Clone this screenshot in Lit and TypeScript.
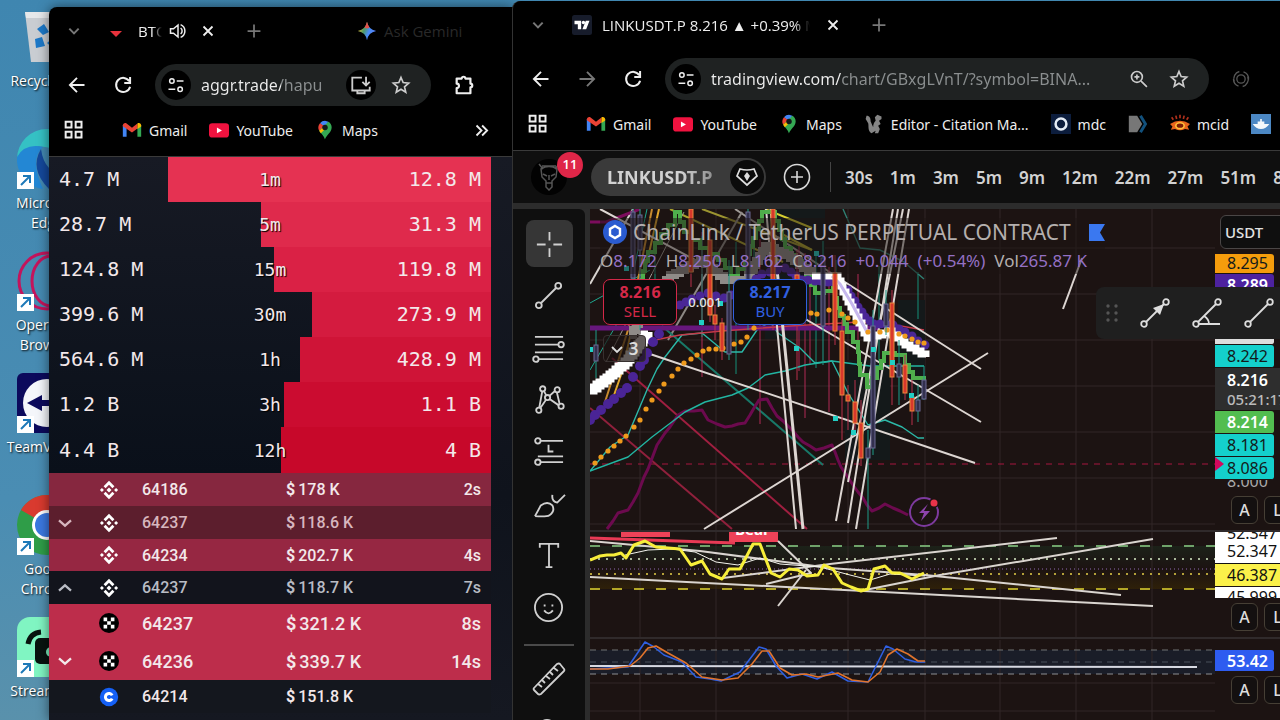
import { LitElement, html, svg, css, nothing } from "lit";
import { customElement, property } from "lit/decorators.js";
import { classMap } from "lit/directives/class-map.js";

/* ---------- icons ---------- */

const glyph = (size: number, body: unknown, box = "0 0 24 24") =>
  html`<svg class="glyph" width=${size} height=${size} viewBox=${box} fill="none" stroke="currentColor" stroke-width="2" aria-hidden="true">${body}</svg>`;

const icons = {
  chevron: () => glyph(14, svg`<path d="M4 8l8 8 8-8" stroke-width="3.4"/>`),
  up: () => glyph(16, svg`<path d="M3 16l9-8 9 8" stroke-width="3.4"/>`),
  down: () => glyph(16, svg`<path d="M3 8l9 8 9-8" stroke-width="3.4"/>`),
  close: () => glyph(12, svg`<path d="M3 3l18 18M21 3L3 21" stroke-width="3.6"/>`),
  plus: () => glyph(14, svg`<path d="M12 1v22M1 12h22" stroke-width="3"/>`),
  back: () => glyph(20, svg`<path d="M21 12H4M12 3.5L3.5 12l8.500 8.500" stroke-width="2.3"/>`),
  forward: () => glyph(20, svg`<path d="M3 12h17M12 3.500l8.500 8.500-8.500 8.500" stroke-width="2.3"/>`),
  reload: () => glyph(20, svg`<path d="M19.500 7.500A8.500 8.500 0 1 0 20.500 14M20.500 2.500v7h-7" stroke-width="2.400"/>`),
  tune: () => glyph(18, svg`<circle cx="6.500" cy="6.500" r="3"/><path d="M13 6.500h9M2 17.500h9"/><circle cx="17.500" cy="17.500" r="3"/>`),
  star: () => glyph(20, svg`<path d="M12 3l2.600 6.100 6.600.6-5 4.400 1.500 6.500L12 17.200l-5.700 3.400 1.500-6.500-5-4.400 6.600-.6z"/>`),
  zoom: () => glyph(20, svg`<circle cx="9.500" cy="9.500" r="6.500"/><path d="M14.500 14.500l7 7M9.500 6.500v6M6.500 9.500h6"/>`),
  install: () => glyph(22, svg`<path d="M13 4H2.500v14h19v-4M8 18v3h8v-3M17.500 3v9M13.500 8.500l4 4 4-4"/>`),
  extension: () => glyph(22, svg`<path d="M4 5h5.500a2 2 0 0 1 4 0H19v5.500a2 2 0 0 1 0 4V21H4v-5.500a2.500 2.500 0 0 0 0-5z" stroke-width="2.400" stroke-linejoin="round"/>`),
  sync: () => glyph(20, svg`<path d="M4 15a9 9 0 0 1 6-12M20 9a9 9 0 0 1-6 12M15 3.500a9 9 0 0 1 6 9M3 12a9 9 0 0 0 6 8.500" stroke-width="1.600"/><circle cx="12" cy="12" r="5" stroke-width="1.600"/>`),
  apps: () => glyph(20, svg`<path d="M2 2h7v7H2zM14 2h7v7h-7zM2 14h7v7H2zM14 14h7v7h-7z" stroke-width="2.400"/>`),
  more: () => glyph(15, svg`<path d="M4 4l8 8-8 8M13 4l8 8-8 8" stroke-width="3"/>`),
  speaker: () => glyph(18, svg`<path d="M2 9v6h4l6 5V4L6 9zM15.500 8a5 5 0 0 1 0 8M15.500 3.500a9.200 9.200 0 0 1 0 17" stroke-width="2"/>`),
  gmail: () => glyph(20, svg`<g stroke="none"><path d="M1 6v14h4.500V9z" fill="#4285f4"/><path d="M18.500 9v11H23V6z" fill="#34a853"/><path d="M1 6.500C1 4 3.800 2.800 5.500 4.200L12 9.200l6.500-5v6L12 15 1 7.500z" fill="#ea4335"/><path d="M18.500 4.200C20.500 2.800 23 4 23 6.500v1.200l-4.500 3z" fill="#fbbc04"/></g>`),
  youtube: () => glyph(20, svg`<rect y="4" width="24" height="17" rx="4" fill="#f0123f" stroke="none"/><path d="M9.500 9v7l6-3.500z" fill="#fff" stroke="none"/>`),
  maps: () => glyph(20, svg`<g stroke="none"><path d="M12 1a8 8 0 0 0-6 2.800L12 9l4-7z" fill="#4285f4"/><path d="M6 3.800A8.500 8.500 0 0 0 5 13l7-5z" fill="#ea4335"/><path d="M5 13c2 3 6 6 7 10.500 1-5 8-8.500 8-14.500A8 8 0 0 0 16 2z" fill="#34a853"/><path d="M5 13l2 3 8-8-3-1z" fill="#fbbc04"/><circle cx="12" cy="9" r="3.300" fill="#10191a"/></g>`),
  squirrel: () => glyph(20, svg`<path d="M3 2c4 0 5 3 5 7l3 7c0-4 1-6 3-8l-1-4 3-3 5 2v3l-3 2 2 4-3 2 2 4-2 5h-4l1-3-5 3C4 20 6 14 5 11L2 6z" fill="#858585" stroke="none"/>`),
  mdc: () => glyph(20, svg`<rect width="24" height="24" fill="#0c1d3d" stroke="none"/><circle cx="12" cy="12" r="6.500" stroke="#e4ecf5" stroke-width="3"/>`),
  tag: () => glyph(20, svg`<path d="M1 2h10l6 10-6 10H1z" fill="#777" stroke="none"/><path d="M15 2l6 10-6 10" stroke="#12517d" stroke-width="3.500"/>`),
  eye: () => glyph(20, svg`<path d="M0 12l3 3-2 4 5-1q6 3 12 0l5 1-2-4 3-3q-12-8-24 0" fill="#e8641c" stroke="none"/><ellipse cx="12" cy="14" rx="5" ry="3.500" fill="#7a1c08" stroke="#ffc03a" stroke-width="2"/><path d="M4 7L2 4M8 6L7 2M12 5V1M16 6l1-4M20 7l2-3" stroke="#b0301c"/>`),
  boat: () => glyph(20, svg`<rect width="24" height="24" fill="#4c88c4" stroke="none"/><path d="M2 12h20q-4 6-10 6T2 12M8 9h8v3H8zM11 6h2v3h-2z" fill="#f4f8fb" stroke="none"/>`),
  gemini: () => html`<svg width="20" height="20" viewBox="0 0 24 24" aria-hidden="true"><defs><linearGradient id="gem" x1="0" y1="0.300" x2="1" y2="0.700"><stop offset="0" stop-color="#f2c12e"/><stop offset=".35" stop-color="#4c9a6a"/><stop offset=".6" stop-color="#4a8cf7"/><stop offset="1" stop-color="#5a7df5"/></linearGradient></defs><path d="M12 1q1.500 9 11 11-9.500 2-11 11Q10.500 14 1 12q9.500-2 11-11" fill="url(#gem)"/><path d="M12 1q1.500 5 3 7l-3 1-3-1q2-3 3-7" fill="#e2504a"/></svg>`,
  tradingview: () => glyph(20, svg`<rect width="24" height="24" rx="3" fill="#171c2b" stroke="none"/><path d="M3 7h8v10H7v-6H3zM16.500 7H21l-4 10h-4.500z" fill="#fff" stroke="none"/><circle cx="13.700" cy="9" r="2" fill="#fff" stroke="none"/>`),
  redArrow: () => glyph(16, svg`<path d="M3 12h18l-9 9z" fill="#e8323c" stroke="none"/>`),
};

type Mark = { icon: unknown; text?: string };

const MARKS: Mark[] = [
  { icon: icons.gmail(), text: "Gmail" },
  { icon: icons.youtube(), text: "YouTube" },
  { icon: icons.maps(), text: "Maps" },
];

/* ---------- browser frame ---------- */

@customElement("browser-window")
export class BrowserWindow extends LitElement {
  @property() tabTitle = "";
  @property() host = "";
  @property() path = "";
  @property({ attribute: false }) favicon: unknown = nothing;
  @property({ attribute: false }) marks: Mark[] = MARKS;
  @property({ type: Boolean }) audio = false;
  @property({ type: Boolean }) canForward = false;

  static styles = css`
    :host { display: flex; flex-direction: column; background: #000; color: #eee; overflow: hidden;
      font-family: "Open Sans", "Noto Sans", sans-serif; font-size: 14px; }
    button { all: unset; display: grid; place-items: center; flex: none; }
    svg { display: block; flex: none; }
    .tabs { display: flex; align-items: center; height: 48px; padding-left: 18px; flex: none; }
    .tab { display: flex; align-items: center; margin-left: 27px; }
    .title { width: 208px; margin: 0 17px 0 10px; white-space: nowrap; overflow: hidden; font-size: 15px;
      mask-image: linear-gradient(90deg, #000 92%, transparent); }
    .short .title { width: 24px; margin: 0 7px 0 14px; mask-image: linear-gradient(90deg, #000 60%, transparent); }
    .short .mute { margin-right: 15px; }
    .dim { color: #777; }
    .new { margin-left: 33px; }
    .gemini { display: flex; align-items: center; gap: 7px; margin-left: 96px; color: #292929; font-size: 15px; }
    .nav { display: flex; align-items: center; gap: 22px; margin-top: 9px; padding-left: 18px; flex: none; }
    .moves { display: flex; gap: 26px; }
    .pill { display: flex; align-items: center; flex: 1; min-width: 0; height: 42px; border-radius: 21px; background: #1f2222; }
    .chip { display: grid; place-items: center; width: 30px; height: 30px; border-radius: 50%; background: #000; flex: none; }
    .site { margin: 0 10px 0 6px; }
    input { all: unset; flex: 1; min-width: 0; font: 16px "Noto Sans", "Open Sans", sans-serif; white-space: nowrap; overflow: hidden; }
    .tools { display: flex; align-items: center; gap: 20px; padding: 0 20px 0 8px; color: #ccc; }
    .short .tools { gap: 15px; }
    .ext { display: flex; gap: 24px; width: 49px; overflow: hidden; color: #555; }
    .short .ext { width: 60px; color: #eee; }
    .marks { display: flex; align-items: center; height: 51px; padding: 0 0 2px 15px; flex: none; border-bottom: 1px solid #3a3a3a; box-sizing: border-box; }
    .list { display: flex; gap: 22px; margin-left: 38px; flex: 1; min-width: 0; overflow: hidden; font-family: "Noto Sans", "Open Sans", sans-serif; }
    a { display: flex; align-items: center; gap: 7px; color: #eee; text-decoration: none; white-space: nowrap; flex: none; }
    .overflow { margin-right: 24px; }
    .page { flex: 1; min-height: 0; display: flex; flex-direction: column; }
  `;

  render() {
    const ink = this.audio ? 80 : 130;
    return html`
      <div class=${classMap({ frame: true, short: this.audio })}>
        <div class="tabs">
          <button class="dim" aria-label="Search tabs">${icons.chevron()}</button>
          <div class="tab">
            ${this.favicon}<span class="title">${this.tabTitle}</span>
            ${this.audio ? html`<button class="mute" aria-label="Mute tab">${icons.speaker()}</button>` : nothing}
            <button aria-label="Close tab">${icons.close()}</button>
          </div>
          <button class="new dim" aria-label="New tab">${icons.plus()}</button>
          ${this.audio ? html`<button class="gemini">${icons.gemini()}<span>Ask Gemini</span></button>` : nothing}
        </div>
        <div class="nav">
          <div class="moves">
            <button aria-label="Back">${icons.back()}</button>
            ${this.canForward ? html`<button class="dim" aria-label="Forward">${icons.forward()}</button>` : nothing}
            <button aria-label="Reload">${icons.reload()}</button>
          </div>
          <div class="pill">
            <button class="chip site" aria-label="Site information">${icons.tune()}</button>
            <input aria-label="Address" .value=${this.host + this.path}
              style="color:transparent;-webkit-background-clip:text;background-clip:text;background-image:linear-gradient(90deg,#eee ${ink}px,#8b8f90 ${ink}px)" />
            <div class="tools">
              ${this.audio
                ? html`<button class="chip" aria-label="Install app">${icons.install()}</button>`
                : html`<button aria-label="Zoom">${icons.zoom()}</button>`}
              <button aria-label="Bookmark">${icons.star()}</button>
            </div>
          </div>
          <div class="ext">
            ${this.audio
              ? html`<button aria-label="Extensions">${icons.extension()}</button>`
              : html`<button aria-label="Sync">${icons.sync()}</button>`}
          </div>
        </div>
        <div class="marks">
          <button aria-label="Apps">${icons.apps()}</button>
          <nav class="list">
            ${this.marks.map((m) => html`<a href="#">${m.icon}${m.text ? html`<span>${m.text}</span>` : nothing}</a>`)}
          </nav>
          ${this.audio ? html`<button class="overflow" aria-label="More bookmarks">${icons.more()}</button>` : nothing}
        </div>
      </div>
      <div class="page"><slot></slot></div>
    `;
  }
}

/* ---------- trade flow ---------- */

const FLOW: [string, string, string, number, string][] = [
  ["4.7 M", "1m", "12.8 M", 27, "#e53252"],
  ["28.7 M", "5m", "31.3 M", 48, "#df2a4c"],
  ["124.8 M", "15m", "119.8 M", 51, "#da2145"],
  ["399.6 M", "30m", "273.9 M", 59.4, "#d41b3f"],
  ["564.6 M", "1h", "428.9 M", 56.7, "#cf1437"],
  ["1.2 B", "3h", "1.1 B", 53.2, "#cb0c30"],
  ["4.4 B", "12h", "4 B", 52.4, "#c7082a"],
];

type Trade = { tone: string; arrow?: "up" | "down"; venue: "binance" | "okx" | "coinbase"; price: string; size: string; age: string };

const TRADES: Trade[] = [
  { tone: "mid", venue: "binance", price: "64186", size: "178 K", age: "2s" },
  { tone: "dark", arrow: "down", venue: "binance", price: "64237", size: "118.6 K", age: "" },
  { tone: "warm", venue: "binance", price: "64234", size: "202.7 K", age: "4s" },
  { tone: "off", arrow: "up", venue: "binance", price: "64237", size: "118.7 K", age: "7s" },
  { tone: "big", venue: "okx", price: "64237", size: "321.2 K", age: "8s" },
  { tone: "big", arrow: "down", venue: "okx", price: "64236", size: "339.7 K", age: "14s" },
  { tone: "plain", venue: "coinbase", price: "64214", size: "151.8 K", age: "" },
];

const venueIcon = {
  binance: () => glyph(20, svg`<g fill="#fff" stroke="none"><path d="M12 1l6.500 6.500-2.400 2.400L12 5.800 7.900 9.900 5.500 7.500zM12 23l6.500-6.500-2.400-2.400-4.100 4.100-4.100-4.100-2.400 2.400zM12 9l3 3-3 3-3-3zM3.500 9.600L5.900 12l-2.400 2.400L1.100 12zM20.500 9.600l2.400 2.400-2.400 2.400-2.400-2.400z"/></g>`),
  okx: () => glyph(20, svg`<circle cx="12" cy="12" r="12" fill="#000" stroke="none"/><path d="M5.500 5.500h4.300v4.300H5.500zM14.200 5.500h4.300v4.300h-4.300zM9.800 9.800h4.400v4.400H9.800zM5.500 14.200h4.300v4.300H5.500zM14.200 14.200h4.300v4.300h-4.300z" fill="#fff" stroke="none"/>`),
  coinbase: () => glyph(20, svg`<circle cx="12" cy="12" r="11" fill="#1560f5" stroke="none"/><path d="M15.800 10a4.300 4.300 0 1 0 0 4" stroke="#fff" stroke-width="3.600"/>`),
};

@customElement("trade-flow")
export class TradeFlow extends LitElement {
  static styles = css`
    :host { display: block; flex: 1; padding-right: 22px; background: linear-gradient(#171a24, #0f131c 60%, #151821); color: #f3e8ea; overflow: hidden; }
    svg { display: block; }
    .ratio { display: grid; grid-template-columns: 1fr 60px 1fr; align-items: center; height: 45px; padding: 0 10px;
      background: linear-gradient(90deg, transparent var(--at), var(--tone) var(--at)); font: 20px/45px "DejaVu Sans Mono", "Liberation Mono", monospace; }
    .ratio:last-child { height: 46px; }
    .ratios { background: linear-gradient(#171a24, #0a101a); }
    .span { font-size: 18px; text-align: center; text-shadow: 1px 1px 1px #000; }
    .sell { text-align: right; }
    .trade { display: grid; grid-template-columns: 50px 43px 144px 1fr auto; align-items: center; height: 33px; padding: 0 10px 0 0;
      font: 500 16px Roboto, sans-serif; }
    .trade > :first-child { padding-left: 8px; }
    .size b { margin-right: 3px; font-weight: 700; }
    .mid { background: #86273f; }
    .dark { background: #5c1e2d; color: #d7b6be; }
    .warm { background: #962742; height: 32px; }
    .off { background: #12141c; color: #b9bcc4; }
    .big { background: #bd2d4b; height: 38px; font-size: 18px; }
    .plain { background: #14171e; }
  `;
  render() {
    return html`
      <div class="ratios">
        ${FLOW.map(([buy, span, sell, at, tone]) => html`<div class="ratio" style="--at:${at}%;--tone:${tone}">
          <span>${buy}</span><span class="span">${span}</span><span class="sell">${sell}</span></div>`)}
      </div>
      ${TRADES.map((t) => html`<div class="trade ${t.tone}">
        <span>${t.arrow ? icons[t.arrow]() : nothing}</span>
        <span class="venue">${venueIcon[t.venue]()}</span>
        <span>${t.price}</span><span class="size"><b>$</b>${t.size}</span><span>${t.age}</span></div>`)}
    `;
  }
}

/* ---------- chart drawing ---------- */

type Pt = [number, number];
const line = (pts: Pt[], color: string, width = 2, extra = "") =>
  svg`<polyline points=${pts.map((p) => p.join(",")).join(" ")} stroke=${color} stroke-width=${width} stroke-dasharray=${extra || "none"} fill="none" stroke-linejoin="round"/>`;
const dots = (pts: Pt[], color: string, r: number) => pts.map(([x, y]) => svg`<circle cx=${x} cy=${y} r=${r} fill=${color}/>`);
const steps = (pts: Pt[], color: string, width: number) => {
  const d = pts.map(([x, y], i) => (i ? `H${x}V${y}` : `M${x} ${y}`)).join("");
  return svg`<path d=${d} stroke=${color} stroke-width=${width} fill="none"/>`;
};
/* splits a polyline into small stair steps */
const dense = (pts: Pt[], gap = 4): Pt[] => {
  const out: Pt[] = [];
  for (let i = 0; i + 1 < pts.length; i++) {
    const [a, b] = [pts[i], pts[i + 1]];
    const n = Math.max(1, Math.round(Math.hypot(b[0] - a[0], b[1] - a[1]) / gap));
    for (let k = 0; k < n; k++) out.push([Math.round(a[0] + ((b[0] - a[0]) * k) / n), Math.round(a[1] + ((b[1] - a[1]) * k) / n)]);
  }
  out.push(pts[pts.length - 1]);
  return out;
};

const RED = "#d8382c", SLATE = "#33304e";
/* x, wick top, body top, body bottom, wick bottom, falling */
const CANDLES: [number, number, number, number, number, boolean][] = [
  [596, 330, 345, 361, 378, false], [633, 209, 212, 278, 300, false], [640, 209, 215, 250, 330, false],
  [691, 209, 209, 272, 287, true], [710, 230, 240, 315, 322, true], [715, 305, 315, 324, 340, true],
  [722, 318, 323, 351, 360, true], [729, 260, 292, 354, 360, false], [748, 209, 212, 292, 330, false],
  [773, 209, 209, 281, 330, true], [797, 250, 275, 322, 380, true], [823, 241, 258, 326, 365, false],
  [835, 255, 273, 331, 345, true], [842, 320, 331, 395, 440, true], [848, 385, 395, 401, 430, true],
  [855, 380, 402, 423, 430, true], [861, 400, 423, 458, 466, true], [868, 430, 448, 458, 529, false],
  [873, 310, 326, 448, 455, false], [886, 290, 304, 326, 335, false], [892, 290, 303, 377, 405, true],
  [899, 340, 364, 377, 405, false], [905, 355, 365, 393, 400, true], [912, 380, 397, 411, 425, true],
  [918, 385, 400, 411, 422, false], [924, 366, 380, 399, 400, false],
];

const verticals = [640, 716, 848, 925, 1000, 1076, 1152];
const white = "#dad5d0";

const pricePane = svg`
  <g stroke="#312727" stroke-width="1">
    ${verticals.map((x) => svg`<path d="M${x} 209V530"/>`)}
    ${[248, 294, 340, 386, 432, 478, 524].map((y) => svg`<path d="M590 ${y}H1400"/>`)}
  </g>
  <g fill="#14191a"><path d="M765 209h60v130h-60zM845 360h45v100h-45zM898 300h27v100h-27z"/></g>
  ${line([[590, 464], [1400, 464]], "#a5173f", 1, "6 6")}
  ${line([[670, 209], [783, 262]], "#a8a02c", 2)}
  ${line([[702, 209], [812, 250]], "#9c9430", 2)}
  ${line([[765, 209], [812, 228]], "#d8cf30", 2)}
  ${line([[780, 233], [812, 250]], "#b0a82e", 2)}
  ${line([[735, 209], [837, 277]], "#a09b97", 2)}
  ${line([[590, 284], [633, 209]], "#d8d3cf", 2)}
  ${line([[590, 303], [650, 270]], "#1fa68e", 1)}
  ${line([[606, 362], [684, 212]], "#9d9893", 1)}
  ${line([[668, 340], [742, 212]], "#8d8884", 2)}
  ${line([[590, 222], [606, 222], [622, 216], [640, 209]], "#7c0c5c", 3)}
  ${line([[605, 402], [628, 330], [652, 209]], "#c88a2e", 2)}
  ${line([[613, 398], [622, 372], [659, 209]], "#e0a52c", 2)}
  ${line([[590, 370], [625, 310], [647, 209]], "#1fa68e", 1)}
  ${line([[590, 408], [732, 529]], "#90203c", 2)}
  ${line([[612, 358], [807, 529]], "#a01f40", 2)}
  ${line([[662, 326], [823, 465]], "#187868", 2)}
  ${[640, 702, 760, 799, 805, 810, 829, 858].map((x, i) => line([[x, 225 + i * 7], [x, 330 + ((i * 47) % 100)]], "#b02a54", 1))}
  ${[655, 702, 736, 754, 816, 836, 879, 918].map((x, i) => line([[x, 230 + i * 6], [x, 300 + ((i * 37) % 80)]], "#159078", 1))}
  ${line(dense([[607, 529], [618, 513], [628, 510], [638, 493], [657, 445], [678, 415], [685, 411], [702, 410], [708, 420], [725, 427], [745, 423], [759, 400], [767, 399], [777, 416], [788, 426], [803, 442], [816, 450], [832, 445], [841, 467], [853, 485], [872, 511], [885, 504], [908, 515]], 8), "#6c0a4e", 3)}
  ${line([[590, 471], [610, 447], [628, 435], [647, 390], [657, 369], [665, 357], [682, 335], [702, 333], [725, 352], [742, 352], [757, 330], [770, 322], [778, 333], [800, 348], [815, 363], [832, 361], [848, 393], [868, 425], [885, 420], [902, 427], [918, 438], [924, 438]], "#2cb8a8", 1.4)}
  ${line([[590, 471], [628, 457], [652, 437], [685, 412], [705, 402], [732, 395], [748, 388], [765, 375], [785, 371], [805, 365], [832, 361], [870, 366], [924, 366]], "#22b5a2", 1.4)}
  ${line([[843, 209], [860, 248], [880, 250], [904, 262], [924, 279]], "#2f7f72", 1.4)}
  ${line([[590, 328], [880, 328]], "#67177c", 5)}
  ${line([[645, 342], [680, 335], [722, 331], [790, 326], [860, 322], [895, 325], [924, 330]], "#c63a4a", 1.4)}
  ${line([[600, 209], [807, 320], [981, 422]], "#ddd6d2")}
  ${line([[650, 354], [975, 463]], "#ddd6d2")}
  ${line([[704, 529], [988, 353]], "#ddd6d2")}
  ${line([[837, 277], [981, 369]], "#ddd6d2")}
  ${line([[766, 209], [796, 529]], "#ddd6d2")}
  ${line([[771, 209], [803, 529]], "#ddd6d2", 3)}
  ${line([[836, 521], [893, 209]], "#ddd6d2")}
  ${line([[848, 523], [898, 209]], "#ddd6d2")}
  ${line([[848, 482], [903, 209]], "#ddd6d2")}
  ${line([[856, 529], [909, 209]], "#ddd6d2")}
  ${line([[1063, 309], [1082, 258]], "#ddd6d2")}
  ${steps(dense([[640, 280], [648, 252], [668, 225], [675, 212], [684, 232], [700, 248], [718, 260], [731, 276], [745, 262], [753, 238], [762, 212], [772, 212], [785, 248], [802, 268], [815, 293], [833, 288], [837, 308], [847, 332], [858, 352], [860, 375], [867, 387], [877, 368], [884, 353], [895, 355], [905, 365], [913, 378], [924, 380]], 10), "#4fae4c", 4)}
  ${steps(dense([[590, 390], [607, 378], [625, 362], [648, 332]], 4), "#fff", 9)}
  ${steps(dense([[630, 335], [650, 298], [670, 275], [700, 260], [724, 280], [745, 280], [765, 246], [785, 255], [812, 274]], 6), "#8f8b88", 8)}
  ${dots(dense([[590, 420], [595, 415], [627, 388], [633, 377], [640, 366], [647, 353], [653, 342], [659, 334]], 9), "#4a2496", 5)}
  ${dots(dense([[680, 305], [692, 299], [708, 293], [724, 298], [745, 290], [762, 274], [785, 268], [802, 280], [834, 282], [848, 290], [858, 307], [865, 317], [874, 324], [893, 325], [905, 332], [925, 345]], 7), "#4a2796", 4.500)}
  ${steps(dense([[812, 276], [836, 276], [848, 302], [867, 338], [888, 331], [905, 345], [926, 357]], 6), "#fff", 7)}
  ${line([[832, 276], [840, 284], [852, 304], [868, 334]], "#c7b8ee", 3)}
  ${dots([[595, 463], [601, 457], [608, 451], [614, 446], [620, 441], [626, 436], [634, 427], [640, 420], [646, 409], [652, 400], [659, 391], [664, 384], [672, 376], [678, 369], [684, 363], [691, 359], [697, 355], [703, 351], [709, 349], [716, 349], [723, 348], [734, 344], [741, 342], [747, 337], [754, 328], [811, 313], [817, 314], [829, 310], [842, 314], [848, 318], [855, 322], [868, 332], [880, 332], [887, 330], [899, 334], [905, 336], [912, 339], [918, 342], [924, 343]], "#ef9a1c", 2.6)}
  ${CANDLES.map(([x, wt, bt, bb, wb, fall]) => svg`
    <path d="M${x} ${wt}V${wb}" stroke=${fall ? "#b8304a" : "#1f9c88"}/>
    <rect x=${x - 2} y=${bt} width="4" height=${bb - bt} fill=${fall ? RED : SLATE} stroke=${fall ? "#e88a3c" : "#6d6a94"} stroke-width="1"/>`)}
  <g fill="#22cfc4">${[[590, 349], [701, 322], [720, 303], [796, 348], [816, 253], [835, 418], [853, 432], [873, 349], [892, 362], [911, 395], [626, 268]].map(([x, y]) => svg`<rect x=${x - 2} y=${y - 2} width="5" height="5"/>`)}</g>
  <circle cx="924" cy="512" r="14" fill="#1c1312" stroke="#7d3a9e" stroke-width="2"/>
  <path d="M928 504l-9 9h5l-3 8 9-10h-6z" fill="#8e44ad"/>
  <circle cx="934" cy="503" r="5" fill="#1c1312"/><circle cx="934" cy="503" r="3.500" fill="#e8334a"/>
`;

const rsiPane = svg`
  <defs>
    <linearGradient id="g1" x1="0" y1="0" x2="0" y2="1"><stop offset="0" stop-color="#1c2219"/><stop offset="1" stop-color="#1c1312"/></linearGradient>
    <linearGradient id="g2" x1="0" y1="0" x2="0" y2="1"><stop offset="0" stop-color="#1c1312"/><stop offset="1" stop-color="#2e2009"/></linearGradient>
  </defs>
  <rect x="590" y="546" width="900" height="22" fill="url(#g1)"/>
  <rect x="590" y="568" width="900" height="21" fill="url(#g2)"/>
  <g stroke="#312727">${verticals.map((x) => svg`<path d="M${x} 532V637"/>`)}</g>
  ${line([[590, 546], [1400, 546]], "#6fa36a", 2, "10 12")}
  ${line([[590, 559], [1400, 559]], "#a9b89a", 2, "2 6")}
  ${line([[590, 569], [1400, 569]], "#8d6bb5", 1, "1 3")}
  ${line([[590, 574], [1400, 574]], "#b5a23a", 2, "2 6")}
  ${line([[590, 589], [1400, 589]], "#b3a727", 2, "10 12")}
  ${line([[590, 538], [735, 543]], "#e83a55", 3)}
  <g>
    <rect x="621" y="530" width="49" height="7" fill="#ee4258"/><rect x="729" y="530" width="49" height="12" fill="#ee4258"/>
    <text x="735" y="535" fill="#fff" font-size="15" font-weight="700">Bear</text>
  </g>
  ${line([[590, 541], [700, 551], [830, 568], [925, 575], [1121, 595]], white)}
  ${line([[590, 577], [1153, 606]], white)}
  ${line([[723, 578], [830, 564], [1057, 538]], white)}
  ${line([[865, 590], [940, 575], [1153, 539]], white)}
  ${line([[778, 541], [811, 573], [766, 584]], white)}
  ${line([[778, 606], [806, 570]], white)}
  ${line([[625, 555], [648, 550], [672, 549], [695, 552], [716, 562], [738, 565], [760, 558], [780, 564], [820, 567], [850, 575], [870, 580], [890, 574], [925, 576]], "#f4f4ee", 1)}
  ${line([[590, 560], [600, 556], [607, 555], [614, 555], [621, 553], [626, 558], [634, 545], [645, 541], [656, 547], [680, 549], [691, 565], [702, 561], [710, 574], [722, 579], [729, 569], [740, 569], [753, 544], [760, 544], [771, 573], [780, 577], [789, 569], [798, 570], [807, 576], [818, 575], [824, 565], [833, 569], [842, 583], [851, 587], [861, 591], [868, 589], [874, 569], [885, 566], [892, 573], [900, 573], [912, 579], [924, 573]], "#f7ee3a", 3)}
`;

const stochPane = svg`
  <rect x="590" y="650" width="900" height="24" fill="#1a1d28"/>
  <g stroke="#312727">${verticals.map((x) => svg`<path d="M${x} 640V720"/>`)}<path d="M590 683H1400M590 711H1400"/></g>
  ${line([[590, 650], [1400, 650]], "#6e7372", 1, "6 5")}
  ${line([[590, 662], [1400, 662]], "#49505a", 1, "6 5")}
  ${line([[590, 674], [1400, 674]], "#8c8f92", 1, "6 5")}
  ${line([[590, 666], [1197, 667]], "#d7d9e2", 2)}
  ${line([[590, 669], [610, 668], [628, 667], [645, 642], [654, 647], [664, 655], [682, 662], [696, 677], [710, 679], [721, 681], [740, 672], [759, 647], [766, 649], [776, 666], [787, 678], [802, 674], [817, 679], [832, 672], [848, 681], [868, 682], [877, 664], [886, 646], [893, 649], [905, 659], [916, 662], [925, 662]], "#2f5fe0", 1.6)}
  ${line([[590, 669], [608, 669], [630, 666], [640, 658], [648, 648], [656, 646], [668, 653], [686, 663], [702, 677], [722, 680], [738, 678], [752, 664], [762, 651], [769, 651], [780, 668], [792, 675], [806, 674], [818, 677], [838, 673], [852, 680], [868, 682], [880, 672], [888, 655], [897, 649], [908, 654], [918, 661], [925, 661]], "#e0742c", 1.6)}
`;

const DRAW = [
  svg`<path d="M15 2v9M15 19v9M2 15h9M19 15h9"/>`,
  svg`<circle cx="4" cy="24" r="3"/><circle cx="24" cy="4" r="3"/><path d="M6 22L22 6"/>`,
  svg`<path d="M0 3h29M0 11h25M0 19h29M3 26h26"/><circle cx="27" cy="11" r="2.800" fill="#0f0f0f"/><circle cx="1" cy="26" r="2.800" fill="#0f0f0f"/>`,
  svg`<path d="M8 3L4 25l9-13 9-8 4 17-13-9L8 3"/><g fill="#0f0f0f"><circle cx="8" cy="3" r="2.700"/><circle cx="4" cy="25" r="2.700"/><circle cx="13" cy="12" r="2.700"/><circle cx="23" cy="4" r="2.700"/><circle cx="27" cy="21" r="2.700"/></g>`,
  svg`<circle cx="3" cy="3" r="2.800"/><circle cx="3" cy="25" r="2.800"/><path d="M6 3h23M3 19h26M6 25h23M14 7v7h5"/>`,
  svg`<path d="M0 27Q4 20 6 16q7-5 12 0 3 6-3 10-3 2-15 1M18 5q-1 7 5 8l8-8"/>`,
  svg`<path d="M5 6V2h19v4M14.500 2v24M11 26h7"/>`,
  svg`<circle cx="14" cy="14" r="14"/><path d="M9.500 17q4.500 6 9 0M10 11v2M18 11v2"/>`,
];

@customElement("trading-desk")
export class TradingDesk extends LitElement {
  static styles = css`
    :host { display: flex; flex-direction: column; flex: 1; min-height: 0; background: #2c2c2c; color: #d2d2d2;
      font-family: "Noto Sans", "Open Sans", sans-serif; }
    button { all: unset; display: grid; place-items: center; flex: none; box-sizing: border-box; }
    svg { display: block; flex: none; overflow: visible; }
    .head { display: flex; align-items: center; height: 52px; padding-left: 18px; background: #0f0f0f; flex: none; overflow: hidden; font-weight: 600; font-size: 17px; }
    .avatar { position: relative; width: 36px; height: 36px; border-radius: 50%; background: #020202; }
    .badge { position: absolute; left: 26px; top: -7px; width: 26px; height: 26px; border-radius: 50%; background: #df2648; color: #fff; font: 600 13px/24px "Open Sans", sans-serif; text-align: center; }
    .symbol { display: flex; align-items: center; height: 38px; margin-left: 24px; padding: 0 2px 0 16px; border-radius: 19px; background: #3a3a3a; font-weight: 700; font-size: 18px; box-sizing: border-box; }
    .symbol span { width: 123px; overflow: hidden; text-align: left; mask-image: linear-gradient(90deg, #000 60%, #0008 88%); }
    .gem { display: grid; place-items: center; width: 34px; height: 34px; border-radius: 50%; background: #0b0b0b; }
    .add { margin-left: 17px; }
    .rule { width: 1px; height: 30px; background: #444; margin: 0 14px 0 19px; flex: none; }
    .spans { display: flex; gap: 17px; }
    .body { display: flex; gap: 5px; flex: 1; min-height: 0; margin-top: 6px; }
    .draw { display: flex; flex-direction: column; align-items: center; width: 72px; background: #0f0f0f; border-radius: 0 6px 0 0; padding-top: 11px; box-sizing: border-box; flex: none; overflow: hidden; }
    .draw button { width: 47px; height: 47px; margin-bottom: 5px; border-radius: 8px; }
    .draw .on { background: #363636; }
    .cut { width: 50px; height: 2px; background: #4a4a4a; flex: none; margin: 8px 0 9px; }
    .charts { display: flex; flex-direction: column; flex: 1; min-width: 0; background: #1c1312; overflow: hidden; }
    .pane { position: relative; display: flex; flex: none; overflow: hidden; border-bottom: 2px solid #302a2b; box-sizing: border-box; }
    .p1 { height: 323px; } .p2 { height: 107px; } .p3 { flex: 1; border: 0; }
    .plot { flex: 1; min-width: 0; overflow: hidden; }
    .plot svg { width: 810px; overflow: hidden; font-family: "Open Sans", sans-serif; }
    .axis { display: flex; flex-direction: column; width: 65px; flex: none; overflow: hidden; background: #1c1312; font-size: 16px; line-height: 22px; position: relative; }
    .legend { position: absolute; left: 10px; top: 9px; display: flex; flex-direction: column; }
    .name { display: flex; align-items: center; gap: 6px; padding-left: 3px; height: 28px; font-size: 21px; color: #b4afae; background: #1c131280; white-space: nowrap; }
    .name svg:last-child { margin-left: 11px; }
    .ohlc { display: flex; gap: 9px; height: 28px; align-items: center; font-size: 17px; color: #b4afae; background: #1c131280; white-space: nowrap; }
    .ohlc b { font-weight: 400; color: #9470c4; }
    .deal { display: flex; align-items: center; gap: 8px; margin: 5px 0 0 3px; font-size: 14px; }
    .deal span { width: 40px; display: flex; justify-content: center; color: #e4e4e4; font-weight: 500; font-size: 13px; }
    .deal button { width: 74px; height: 46px; border: 1px solid #d42848; border-radius: 7px; background: #0b0b0b; color: #d42848; font-size: 15px; line-height: 19px; text-align: center; align-content: center; }
    .deal strong { font-size: 16px; }
    .deal .buy { border-color: #3160e0; color: #3160e0; }
    .count { display: flex; align-items: center; justify-content: center; gap: 6px; width: 43px; height: 27px; margin: 10px 0 0 3px; border-radius: 4px; background: #1c1312b0; border: 1px solid #37302f; color: #ddd; font-size: 17px; font-weight: 600; }
    select { appearance: none; height: 34px; margin: 6px 0 5px 5px; padding-left: 4px; width: 90px; border: 1px solid #4a4646; border-radius: 6px; background: #0f0f0f; color: #e2e2e2; font: 500 15px "Noto Sans", sans-serif; flex: none; }
    .tag { width: 59px; height: 23px; padding-left: 12px; box-sizing: border-box; background: #14d0cc; color: #131a1a; border-radius: 0 3px 3px 0; flex: none; white-space: nowrap; overflow: hidden; border-bottom: 1px solid #1c1312; }
    .orange { height: 20px; background: #f59c0c; line-height: 18px; } .violet { background: #4d229f; color: #fff; font-weight: 600; }
    .pale { background: #ddd; height: 48px; }
    .now { width: 90px; height: 43px; background: #2e2e2e; color: #fff; font-weight: 600; line-height: 19px; padding-top: 3px; }
    .now small { display: block; font-size: 15px; color: #bbb; font-weight: 500; }
    .lime { background: #52bd50; color: #fff; font-weight: 600; }
    .bare { height: 7px; line-height: 2px; background: none; color: #aaa; border: 0; }
    .keys { display: flex; gap: 6px; margin: 9px 0 0 16px; }
    .keys button { width: 27px; height: 28px; border: 1px solid #463f35; border-radius: 6px; background: #141010; color: #ddd; font-size: 16px; font-weight: 500; }
    .paper { background: #fff; color: #111; border: 0; width: 90px; border-radius: 0; }
    .top { height: 8px; line-height: 2px; } .last { height: 11px; line-height: 20px; }
    .yellow { background: #fbf14a; color: #111; width: 90px; height: 24px; border-radius: 0; border-top: 1px solid #111; line-height: 22px; }
    .blue { background: #2e5cf0; color: #fff; width: 59px; margin-top: 11px; height: 22px; font-weight: 600; }
    .p2 .keys { margin-top: 5px; }
    .p3 .keys { margin-top: 4px; }
    .mark { position: absolute; left: 0; top: 248px; border: 7px solid transparent; border-left: 9px solid #d3085e; border-right: 0; }
    .float { position: absolute; right: 0; top: 78px; display: flex; align-items: center; gap: 22px; width: 184px; height: 52px; padding-left: 10px; box-sizing: border-box; border-radius: 8px 0 0 8px; background: #1f1f1f; overflow: hidden; }
  `;

  private keys() {
    return html`<div class="keys"><button>A</button><button>L</button></div>`;
  }
  private plot(box: string, height: number, body: unknown) {
    return html`<div class="plot"><svg viewBox=${box} height=${height} fill="none" preserveAspectRatio="xMinYMin slice" role="img" aria-label="Chart">${body}</svg></div>`;
  }

  render() {
    const ohlc = [["O", "8.172"], ["H", "8.250"], ["L", "8.162"], ["C", "8.216"], ["", "+0.044"], ["", "(+0.54%)"], ["Vol", "265.87 K"]];
    return html`
      <div class="head">
        <button class="avatar" aria-label="Account">
          <svg width="24" height="28" viewBox="0 0 24 28" fill="none" stroke="#555" stroke-width="1.500"><path d="M2 1l4 5M22 1l-4 5M4 6q8-5 16 0l-1 8-4 4v6l-3 3-3-3v-6l-4-4zM6 11l4 2M18 11l-4 2M9 20h6M12 12v5M5 3h14"/></svg>
          <span class="badge">11</span>
        </button>
        <button class="symbol"><span>LINKUSDT.P</span><i class="gem">
          <svg width="22" height="20" viewBox="0 0 22 20" fill="none" stroke="#ddd" stroke-width="1.700"><path d="M4 2q7 2 14 0l3 7-10 9L1 9z"/><path d="M11 5l3 4-3 5-3-5z" fill="#ddd" stroke="none"/></svg></i></button>
        <button class="add" aria-label="Compare"><svg width="28" height="28" viewBox="0 0 28 28" fill="none" stroke="#d8d8d8" stroke-width="1.600"><circle cx="14" cy="14" r="12.500"/><path d="M14 8v12M8 14h12"/></svg></button>
        <i class="rule"></i>
        <div class="spans">${["30s", "1m", "3m", "5m", "9m", "12m", "22m", "27m", "51m", "89m"].map((t) => html`<button>${t}</button>`)}</div>
      </div>
      <div class="body">
        <div class="draw">
          ${DRAW.map((d, i) => html`<button class=${i ? "" : "on"} aria-label="Drawing tool ${i + 1}"><svg width="32" height="32" viewBox="-2 -2 33 33" fill="none" stroke="#d0d0d0" stroke-width="1.900">${d}</svg></button>`)}
          <i class="cut"></i>
          <button aria-label="Measure"><svg width="34" height="34" viewBox="0 0 34 34" fill="none" stroke="#d0d0d0" stroke-width="1.800"><path d="M2 26L25 2q2-1 3 0l4 5q1 1 0 2L9 32q-2 1-3 0l-4-4q-1-1 0-2zM6 22l4 3M10 18l3 3M14 14l4 3M18 10l3 3M22 6l4 3"/></svg></button>
          <button aria-label="Zoom in"><svg width="30" height="30" viewBox="0 0 30 30" fill="none" stroke="#d0d0d0" stroke-width="1.800"><circle cx="13" cy="13" r="9"/></svg></button>
        </div>
        <div class="charts">
          <div class="pane p1">
            ${this.plot("590 209 810 321", 321, pricePane)}
            <div class="axis">
              <select aria-label="Currency"><option>USDT</option></select>
              <span class="tag orange">8.295</span><span class="tag violet">8.289</span><span class="tag pale"></span>
              <span class="tag">8.242</span><span class="tag now">8.216<small>05:21:17</small></span>
              <span class="tag lime">8.214</span><span class="tag">8.181</span><span class="tag">8.086</span><span class="tag bare">8.000</span>
              <i class="mark"></i>
              ${this.keys()}
            </div>
            <div class="legend">
              <div class="name"><svg width="24" height="24" viewBox="0 0 24 24"><circle cx="12" cy="12" r="12" fill="#2a5bd0"/><path d="M12 6l5 3v6l-5 3-5-3V9z" fill="none" stroke="#fff" stroke-width="2.400"/></svg>
                <span>ChainLink / TetherUS PERPETUAL CONTRACT</span>
                <svg width="17" height="17" viewBox="0 0 17 17"><path d="M1 0h16l-5 8.500 5 8.500H1z" fill="#3a78f0"/></svg></div>
              <div class="ohlc">${ohlc.map(([k, v]) => html`<span>${k}<b>${v}</b></span>`)}</div>
              <div class="deal"><button><strong>8.216</strong>SELL</button><span>0.001</span><button class="buy"><strong>8.217</strong>BUY</button></div>
              <button class="count"><svg width="12" height="12" viewBox="0 0 12 12" fill="none" stroke="#ddd" stroke-width="1.800"><path d="M1 4l5 5 5-5"/></svg>3</button>
            </div>
            <div class="float">
              <svg width="12" height="18" viewBox="0 0 12 18" fill="#555"><circle cx="2" cy="2" r="1.700"/><circle cx="10" cy="2" r="1.700"/><circle cx="2" cy="9" r="1.700"/><circle cx="10" cy="9" r="1.700"/><circle cx="2" cy="16" r="1.700"/><circle cx="10" cy="16" r="1.700"/></svg>
              <button aria-label="Arrow"><svg width="30" height="30" viewBox="0 0 30 30" fill="none" stroke="#ddd" stroke-width="1.800"><circle cx="4" cy="26" r="2.800"/><circle cx="26" cy="4" r="2.800"/><path d="M6 24L24 6"/><path d="M24 6l-4 11-7-7z" fill="#ddd" stroke="none"/></svg></button>
              <button aria-label="Angle"><svg width="30" height="30" viewBox="0 0 30 30" fill="none" stroke="#ddd" stroke-width="1.800"><circle cx="4" cy="26" r="2.800"/><circle cx="26" cy="4" r="2.800"/><path d="M6 24L24 6M7 26h21M12 18q5 3 5 8"/></svg></button>
              <button aria-label="Trend line"><svg width="30" height="30" viewBox="0 0 30 30" fill="none" stroke="#ddd" stroke-width="1.800"><circle cx="4" cy="26" r="2.800"/><circle cx="26" cy="4" r="2.800"/><path d="M6 24L24 6"/></svg></button>
            </div>
          </div>
          <div class="pane p2">
            ${this.plot("590 532 810 105", 105, rsiPane)}
            <div class="axis"><span class="tag paper top">52.347</span><span class="tag paper">52.347</span><span class="tag yellow">46.387</span><span class="tag paper last">45.999</span>${this.keys()}</div>
          </div>
          <div class="pane p3">
            ${this.plot("590 639 810 81", 81, stochPane)}
            <div class="axis"><span class="tag blue">53.42</span>${this.keys()}</div>
          </div>
        </div>
      </div>
    `;
  }
}

/* ---------- desktop ---------- */

const SHORTCUTS: [string, unknown][] = [
  ["Recycle Bin", svg`<path d="M8 5h46l-5 50H14z" fill="#c9cdd2"/><path d="M8 5h46l-2 6H9z" fill="#e6e8ea"/><path d="M20 22l7-5 5 8-6 3zM18 32l7-2 3 9-9 2zM30 36l9-8 6 8-6 8z" fill="#1c78c8"/>`],
  ["Microsoft Edge", svg`<path d="M30 0a30 30 0 0 0-30 30q10-16 28-12 14 3 30-4A30 30 0 0 0 30 0" fill="#35c1c4"/><path d="M0 28Q8 14 26 18q-14 12 0 42A30 30 0 0 1 0 28" fill="#2387d4"/><path d="M24 20q-12 20 8 40 20 0 26-16-30 6-34-24" fill="#14489b"/>`],
  ["Opera GX Browser", svg`<g fill="none" stroke="#c3145c" stroke-width="3"><circle cx="30" cy="30" r="28"/><ellipse cx="34" cy="30" rx="19" ry="25"/></g>`],
  ["TeamViewer", svg`<rect width="60" height="60" rx="6" fill="#0c0a5c"/><circle cx="30" cy="30" r="24" fill="#f4f6fa"/><path d="M10 30l15-8v5h20v6H25v5z" fill="#0c0a5c"/>`],
  ["Google Chrome", svg`<circle cx="30" cy="30" r="30" fill="#2f9d48"/><path d="M30 30L4 15A30 30 0 0 1 56 15z" fill="#d93a2f"/><circle cx="30" cy="30" r="15" fill="#fff"/><circle cx="30" cy="30" r="12" fill="#3b78e0"/>`],
  ["Streamlabs", svg`<rect width="60" height="60" rx="13" fill="#80f5c2"/><rect x="18" y="21" width="40" height="26" rx="5" fill="#08130f"/><path d="M11 27q2-11 13-12" fill="none" stroke="#08130f" stroke-width="5"/><circle cx="34" cy="35" r="5" fill="#80f5c2"/>`],
];

@customElement("app-root")
export class AppRoot extends LitElement {
  static styles = css`
    :host { display: block; position: relative; height: 100vh; overflow: hidden; background: linear-gradient(175deg, #3f86b0, #4a8db3 60%, #6193a8);
      font-family: "Open Sans", "Noto Sans", sans-serif; }
    .desk { display: flex; flex-direction: column; width: 94px; padding-top: 7px; }
    .item { display: flex; flex-direction: column; align-items: center; height: 122px; flex: none; color: #fff; text-decoration: none; text-align: center; font-size: 14px; line-height: 20px; text-shadow: 1px 1px 2px #000; }
    .item svg { display: block; margin-bottom: 4px; flex: none; }
    .item span { width: 88px; }
    browser-window { position: absolute; bottom: 0; box-sizing: border-box; }
    .left { left: 49px; top: 7px; right: calc(100% - 513px); border-radius: 8px 0 0 0; box-shadow: 0 0 12px #0008; }
    .right { left: 513px; top: 1px; right: 0; border-radius: 8px 0 0 0; box-shadow: -1px 0 0 #333; }
  `;
  render() {
    const marks: Mark[] = [
      ...MARKS,
      { icon: icons.squirrel(), text: "Editor - Citation Ma..." },
      { icon: icons.mdc(), text: "mdc" },
      { icon: icons.tag() },
      { icon: icons.eye(), text: "mcid" },
      { icon: icons.boat() },
    ];
    return html`
      <div class="desk">
        ${SHORTCUTS.map(([name, art], i) => html`<a class="item" href="#"><svg width="60" height="60" viewBox="0 0 60 60">${art}
          ${i ? svg`<rect y="43" width="17" height="17" fill="#fff"/><path d="M4 56l9-9M6 47h7v7" stroke="#1d79b8" stroke-width="2" fill="none"/>` : nothing}</svg><span>${name}</span></a>`)}
      </div>
      <browser-window class="left" audio tabTitle="BTC" host="aggr.trade" path="/hapu" .favicon=${icons.redArrow()}><trade-flow></trade-flow></browser-window>
      <browser-window class="right" canForward tabTitle="LINKUSDT.P 8.216 ▲ +0.39% My" host="tradingview.com" path="/chart/GBxgLVnT/?symbol=BINA..." .favicon=${icons.tradingview()} .marks=${marks}><trading-desk></trading-desk></browser-window>
    `;
  }
}
